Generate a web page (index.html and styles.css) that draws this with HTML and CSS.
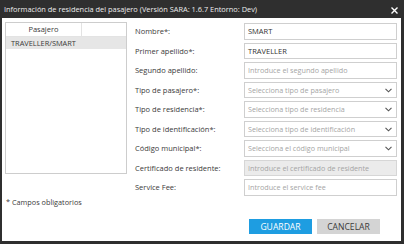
FILE: index.html
```html
<!DOCTYPE html>
<html lang="es">
<head>
    <meta charset="UTF-8">
    <title>Información de residencia del pasajero</title>
    <link rel="stylesheet" href="styles.css">
</head>
<body>
    <div class="window">
        <div class="titlebar">
            <span class="title">Información de residencia del pasajero (Versión SARA: 1.6.7 Entorno: Dev)</span>
            <svg class="close" width="7" height="7" viewBox="0 0 7 7">
                <path d="M0.5 0.5 L6.5 6.5 M6.5 0.5 L0.5 6.5" stroke="#fff" stroke-width="1.4" fill="none"/>
            </svg>
        </div>

        <div class="content">
            <div class="main">
                <!-- Passenger list -->
                <div class="side">
                    <div class="grid-box">
                        <div class="grid-head">
                            <div class="col-name">Pasajero</div>
                            <div class="col-rest"></div>
                        </div>
                        <div class="grid-row selected">TRAVELLER/SMART</div>
                    </div>
                    <div class="note">* Campos obligatorios</div>
                </div>

                <!-- Residence form -->
                <form class="form">
                    <label>Nombre*:</label>
                    <div class="field">SMART</div>

                    <label>Primer apellido*:</label>
                    <div class="field">TRAVELLER</div>

                    <label>Segundo apellido:</label>
                    <div class="field placeholder">Introduce el segundo apellido</div>

                    <label>Tipo de pasajero*:</label>
                    <div class="field placeholder select">Selecciona tipo de pasajero
                        <svg class="chev" width="7" height="5" viewBox="0 0 7 5"><path d="M0.5 0.8 L3.5 3.8 L6.5 0.8" stroke="#555" stroke-width="1.1" fill="none"/></svg>
                    </div>

                    <label>Tipo de residencia*:</label>
                    <div class="field placeholder select">Selecciona tipo de residencia
                        <svg class="chev" width="7" height="5" viewBox="0 0 7 5"><path d="M0.5 0.8 L3.5 3.8 L6.5 0.8" stroke="#555" stroke-width="1.1" fill="none"/></svg>
                    </div>

                    <label>Tipo de identificación*:</label>
                    <div class="field placeholder select">Selecciona tipo de identificación
                        <svg class="chev" width="7" height="5" viewBox="0 0 7 5"><path d="M0.5 0.8 L3.5 3.8 L6.5 0.8" stroke="#555" stroke-width="1.1" fill="none"/></svg>
                    </div>

                    <label>Código municipal*:</label>
                    <div class="field placeholder select">Selecciona el código municipal
                        <svg class="chev" width="7" height="5" viewBox="0 0 7 5"><path d="M0.5 0.8 L3.5 3.8 L6.5 0.8" stroke="#555" stroke-width="1.1" fill="none"/></svg>
                    </div>

                    <label>Certificado de residente:</label>
                    <div class="field placeholder disabled">Introduce el certificado de residente</div>

                    <label>Service Fee:</label>
                    <div class="field placeholder">Introduce el service fee</div>
                </form>
            </div>

            <div class="actions">
                <button class="btn primary">GUARDAR</button>
                <button class="btn secondary">CANCELAR</button>
            </div>
        </div>
    </div>
</body>
</html>
```

FILE: styles.css
```css
/* General */
body {
    margin: 0;
    font-family: "Open Sans", "Noto Sans", sans-serif;
    font-size: 7.5px;
    color: #3a3a3a;
    white-space: nowrap;
}

.window {
    width: 404px;
    height: 244px;
    box-sizing: border-box;
    background: #2f2f2f;
    padding: 0 3px 3px 2px;
    display: flex;
    flex-direction: column;
}

/* Title bar */
.titlebar {
    height: 18px;
    flex-shrink: 0;
    display: flex;
    align-items: center;
    justify-content: space-between;
    padding: 0 3px 0 2px;
}

.title {
    color: #ececec;
    font-size: 7.4px;
}

.close {
    margin-top: 3px;
}

/* Body */
.content {
    flex: 1;
    background: #fff;
    display: flex;
    flex-direction: column;
    padding: 4px 4px 0 3px;
}

.main {
    display: flex;
}

.side {
    width: 122px;
    margin-right: 8px;
}

.grid-box {
    height: 152px;
    border: 1px solid #cdcdcd;
    box-sizing: border-box;
}

.grid-head {
    display: flex;
    height: 13px;
    border-bottom: 1px solid #e3e3e3;
}

.col-name {
    width: 75px;
    text-align: center;
    line-height: 13px;
    border-right: 1px solid #e3e3e3;
}

.grid-row {
    height: 12px;
    line-height: 12px;
    padding-left: 5px;
    font-size: 7.4px;
}

.selected {
    background: #e6e6e6;
}

.note {
    line-height: 10px;
    margin-top: 23px;
    padding-left: 1px;
    font-size: 7.3px;
}

/* Form grid */
.form {
    display: grid;
    grid-template-columns: 109px 153px;
    grid-auto-rows: 16.5px;
    row-gap: 3px;
    margin: 1px 0 0;
}

.form label {
    align-self: center;
}

.field {
    border: 1px solid #cfcfcf;
    box-sizing: border-box;
    padding-left: 3px;
    line-height: 14.5px;
    color: #333;
    position: relative;
    overflow: hidden;
}

.placeholder {
    color: #a5a5a5;
    font-size: 7.2px;
}

.disabled {
    background: #ebebeb;
    border-color: #d6d6d6;
}

.chev {
    position: absolute;
    right: 4px;
    top: 5px;
}

/* Buttons */
.actions {
    display: flex;
    justify-content: flex-end;
    gap: 5px;
    margin-top: 12px;
    padding-right: 17px;
}

.btn {
    width: 63px;
    height: 15px;
    border: none;
    padding: 0;
    font-family: inherit;
    font-size: 8.6px;
}

.primary {
    background: #1e9de1;
    color: #fff;
}

.secondary {
    background: #d4d4d4;
    color: #3a3a3a;
}
```
